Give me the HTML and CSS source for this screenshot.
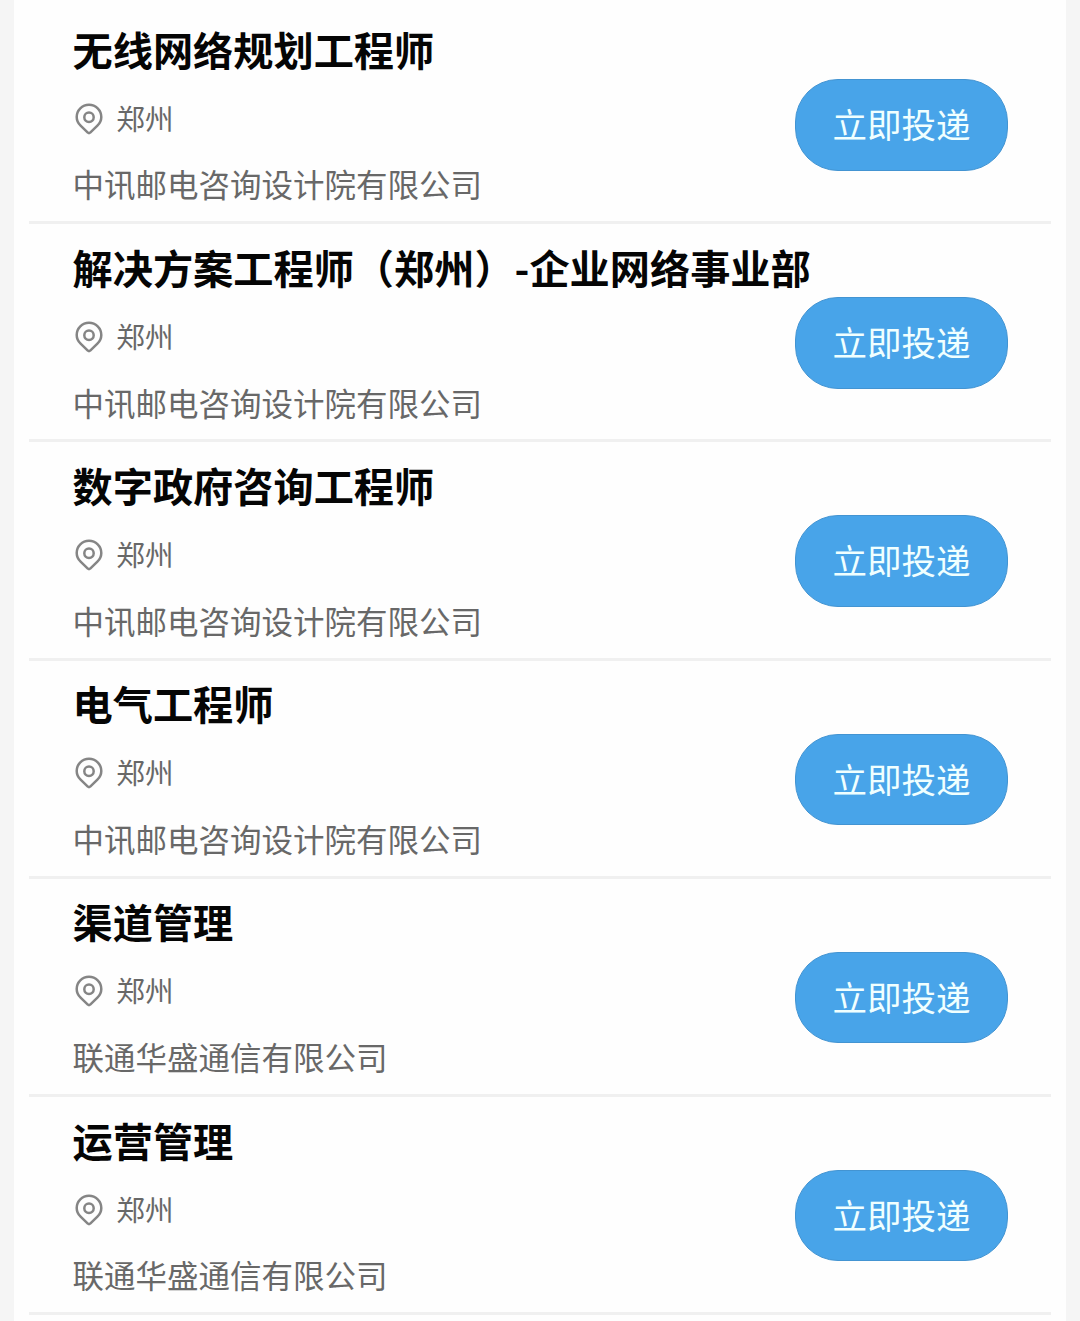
FILE: index.html
```
<!DOCTYPE html>
<html lang="zh-CN">
<head>
<meta charset="utf-8">
<title>职位列表</title>
<link rel="stylesheet" href="styles.css">
</head>
<body>
<svg class="symbols" aria-hidden="true">
  <symbol id="pin" viewBox="0 0 28 32">
    <path d="M12.8 29.6 5.6 22.7C3 20.2 1.7 17.5 1.7 14a12.3 12.3 0 0 1 24.6 0c0 3.5-1.3 6.2-3.9 8.7l-7.2 6.9q-1.2 1-2.4 0Z"/>
    <circle cx="14" cy="14.2" r="4.7"/>
  </symbol>
</svg>
<ul class="jobs">
  <li class="job">
    <div class="info">
      <h2 class="title">无线网络规划工程师</h2>
      <p class="city"><svg class="pin"><use href="#pin"/></svg>郑州</p>
      <p class="company">中讯邮电咨询设计院有限公司</p>
    </div>
    <button class="apply">立即投递</button>
  </li>
  <li class="job">
    <div class="info">
      <h2 class="title">解决方案工程师（郑州）-企业网络事业部</h2>
      <p class="city"><svg class="pin"><use href="#pin"/></svg>郑州</p>
      <p class="company">中讯邮电咨询设计院有限公司</p>
    </div>
    <button class="apply">立即投递</button>
  </li>
  <li class="job">
    <div class="info">
      <h2 class="title">数字政府咨询工程师</h2>
      <p class="city"><svg class="pin"><use href="#pin"/></svg>郑州</p>
      <p class="company">中讯邮电咨询设计院有限公司</p>
    </div>
    <button class="apply">立即投递</button>
  </li>
  <li class="job">
    <div class="info">
      <h2 class="title">电气工程师</h2>
      <p class="city"><svg class="pin"><use href="#pin"/></svg>郑州</p>
      <p class="company">中讯邮电咨询设计院有限公司</p>
    </div>
    <button class="apply">立即投递</button>
  </li>
  <li class="job">
    <div class="info">
      <h2 class="title">渠道管理</h2>
      <p class="city"><svg class="pin"><use href="#pin"/></svg>郑州</p>
      <p class="company">联通华盛通信有限公司</p>
    </div>
    <button class="apply">立即投递</button>
  </li>
  <li class="job">
    <div class="info">
      <h2 class="title">运营管理</h2>
      <p class="city"><svg class="pin"><use href="#pin"/></svg>郑州</p>
      <p class="company">联通华盛通信有限公司</p>
    </div>
    <button class="apply">立即投递</button>
  </li>
</ul>
</body>
</html>
```
FILE: styles.css
```
* {
  box-sizing: border-box;
  margin: 0;
  padding: 0;
}

body {
  background: #f5f5f5;
  font-family: "Noto Sans CJK SC", sans-serif;
}

.symbols {
  display: none;
}

.jobs {
  list-style: none;
  height: 1321px;
  margin: 0 14px;
  padding: 6px 15px 0;
  background: #fefefe;
  overflow: hidden;
}

.job {
  display: grid;
  grid-template-columns: 722.5px 213px;
  height: 218.2px;
  padding-left: 43.5px;
  border-bottom: 3px solid #f0f0f0;
}

.info {
  padding-top: 12.6px;
  white-space: nowrap;
}

.title {
  font-size: 40.2px;
  font-weight: 700;
  line-height: 60px;
  color: #050505;
}

.city {
  display: flex;
  align-items: center;
  gap: 13.5px;
  height: 44px;
  margin-top: 17px;
  font-size: 28.6px;
  line-height: 44px;
  color: #686868;
}

.pin {
  width: 28px;
  height: 32px;
  margin-left: 2.3px;
  margin-top: 2px;
  fill: none;
  stroke: #858585;
  stroke-width: 2.5;
  stroke-linejoin: round;
}

.company {
  margin-top: 20.8px;
  font-size: 31.5px;
  line-height: 46px;
  color: #686868;
}

.apply {
  height: 91.5px;
  margin-top: 73px;
  padding-bottom: 3.5px;
  border: 1px solid #4394d2;
  border-radius: 43px;
  background: #48a4e9;
  color: #f0ffff;
  font-family: inherit;
  font-size: 34.5px;
  line-height: 50px;
}
```
